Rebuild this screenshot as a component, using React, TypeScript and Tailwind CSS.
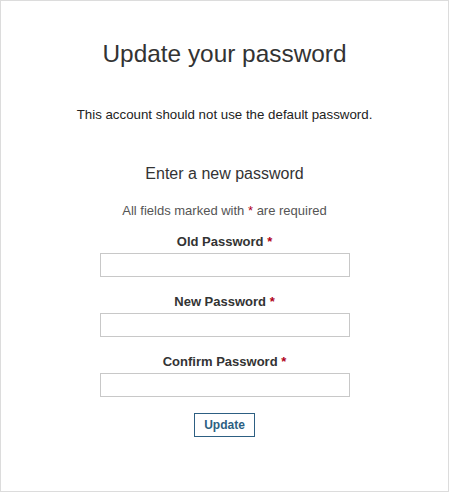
import React from "react";

function Field({ label }: { label: string }) {
  return (
    <div className="flex flex-col items-center">
      <label className="text-[13px] font-bold leading-[16px] text-[#333]">
        {label} <span className="text-[#b00020]">*</span>
      </label>
      <input
        type="password"
        className="mt-[3px] h-[24px] w-[250px] border border-[#c8c8c8] bg-white outline-none"
      />
    </div>
  );
}

export default function App() {
  return (
    <div
      className="h-[492px] w-[449px] border border-[#dcdcdc] bg-white text-[#333]"
      style={{ fontFamily: '"Liberation Sans", Arial, sans-serif' }}
    >
      <div className="flex flex-col items-center">
        <h1 className="mt-[38px] text-[24.4px] leading-[30px] text-[#333]">Update your password</h1>
        <p className="mt-[38px] text-[13.3px] leading-[16px] text-[#222]">
          This account should not use the default password.
        </p>
        <h2 className="mt-[41px] text-[16px] leading-[20px] text-[#333]">Enter a new password</h2>
        <p className="mt-[19px] text-[13px] leading-[15px] text-[#555]">
          All fields marked with <span className="text-[#b00020]">*</span> are required
        </p>
        <div className="mt-[16px] flex flex-col gap-[17px]">
          <Field label="Old Password" />
          <Field label="New Password" />
          <Field label="Confirm Password" />
        </div>
        <button className="mt-[16px] h-[24px] w-[61px] border border-[#2d5f82] bg-white text-[12px] font-bold text-[#2d5f82]">
          Update
        </button>
      </div>
    </div>
  );
}
